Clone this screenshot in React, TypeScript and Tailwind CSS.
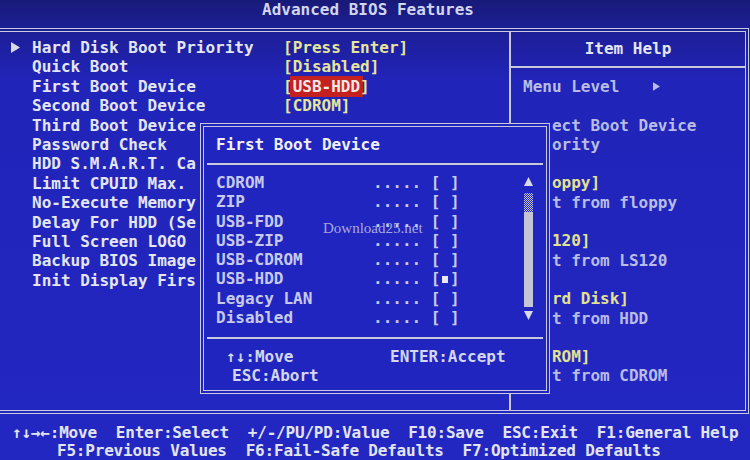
import React from "react";

const rows: [string, string][] = [
  ["Hard Disk Boot Priority", "[Press Enter]"],
  ["Quick Boot", "[Disabled]"],
  ["First Boot Device", "[USB-HDD]"],
  ["Second Boot Device", "[CDROM]"],
  ["Third Boot Device", ""],
  ["Password Check", ""],
  ["HDD S.M.A.R.T. Capability", ""],
  ["Limit CPUID Max. to 3", ""],
  ["No-Execute Memory Protect", ""],
  ["Delay For HDD (Secs)", ""],
  ["Full Screen LOGO Show", ""],
  ["Backup BIOS Image to HDD", ""],
  ["Init Display First", ""],
];

const devices = ["CDROM", "ZIP", "USB-FDD", "USB-ZIP", "USB-CDROM", "USB-HDD", "Legacy LAN", "Disabled"];

const help: { t: string; y?: boolean }[] = [
  { t: "Select Boot Device" },
  { t: "Priority" },
  { t: "" },
  { t: "[Floppy]", y: true },
  { t: "Boot from floppy" },
  { t: "" },
  { t: "[LS120]", y: true },
  { t: "Boot from LS120" },
  { t: "" },
  { t: "[Hard Disk]", y: true },
  { t: "Boot from HDD" },
  { t: "" },
  { t: "[CDROM]", y: true },
  { t: "Boot from CDROM" },
];

function Arrow({ className }: { className?: string }) {
  return (
    <svg width="9" height="11" viewBox="0 0 9 11" className={className}>
      <polygon points="0,0 9,5.5 0,11" fill="currentColor" />
    </svg>
  );
}

function ScrollBar() {
  return (
    <svg width="11" height="150" viewBox="0 0 11 150" className="block">
      <defs>
        <pattern id="dots" width="2" height="2" patternUnits="userSpaceOnUse">
          <rect width="2" height="2" fill="#2125bf" />
          <rect width="1" height="1" fill="#c8cadc" />
          <rect x="1" y="1" width="1" height="1" fill="#c8cadc" />
        </pattern>
      </defs>
      <polygon points="5.5,0 10,9 1,9" fill="#d8dae8" />
      <rect x="1" y="16" width="9" height="19" fill="url(#dots)" />
      <rect x="1" y="35" width="9" height="95" fill="#c4c6d6" />
      <polygon points="1,134 10,134 5.5,143" fill="#d8dae8" />
    </svg>
  );
}

export default function App() {
  return (
    <div
      className="relative w-[750px] h-[460px] overflow-hidden bg-[linear-gradient(180deg,#181a78_0px,#1c1e94_28px,#2124b8_80px,#2327c2_460px)] font-bold text-[16px]"
      style={{ fontFamily: '"DejaVu Sans Mono", "Liberation Mono", monospace' }}
    >
      {/* Header */}
      <div className="h-[28px] flex justify-center pr-[14px] leading-[19px] text-[#d2d5ee] whitespace-pre">
        Advanced BIOS Features
      </div>

      {/* Main frame */}
      <div className="w-[749px] h-[386px] border-t-4 border-r-4 border-b-4 border-double border-[#c8cadc] flex">
        {/* Left column */}
        <div className="w-[511px] h-full border-r-2 border-[#c8cadc] pt-[6px] leading-[19.4px]">
          {rows.map(([label, value], i) => (
            <div key={label} className="flex items-center h-[19.4px]">
              <div className="w-[32px] pl-[11px] flex items-center text-[#d8dae8]">
                {i === 0 ? <Arrow /> : null}
              </div>
              <div
                className={`whitespace-pre overflow-hidden text-[#e4e6f4] ${i >= 4 ? "w-[164px]" : "w-[251px]"}`}
              >
                {label}
              </div>
              {value ? (
                <div className="whitespace-pre text-[#e6e69a]">
                  {value === "[USB-HDD]" ? (
                    <>
                      [<span className="bg-[#c42020] text-[#f2e8e8] -mx-[3px] px-[3px] py-[1px]">USB-HDD</span>]
                    </>
                  ) : (
                    value
                  )}
                </div>
              ) : null}
            </div>
          ))}
        </div>

        {/* Right column */}
        <div className="flex-1 h-full flex flex-col">
          <div className="h-[34px] leading-[34px] text-center text-[#e4e6f4] shrink-0">Item Help</div>
          <div className="h-[2px] bg-[#c8cadc] shrink-0" />
          <div className="pt-[9px] leading-[19.3px] whitespace-pre">
            <div className="h-[19.3px] pl-[12px] flex items-center text-[#b9bde6]">
              Menu Level
              <Arrow className="ml-[34px] w-[7px] h-[9px]" />
            </div>
            <div className="h-[19.3px]" />
            <div className="ml-[41px] overflow-hidden">
              <div className="-ml-[29px]">
                {help.map((h, i) => (
                  <div
                    key={i}
                    className={`h-[19.3px] flex items-center ${h.y ? "text-[#e2e290]" : "text-[#b9bde6]"}`}
                  >
                    {h.t}
                  </div>
                ))}
              </div>
            </div>
          </div>
        </div>
      </div>

      {/* Bottom key help */}
      <div className="pt-[10px] leading-[18px] tracking-[-0.2px] text-[#e2e4f4] whitespace-pre">
        <div className="pl-[12px]">↑↓→←:Move  Enter:Select  +/-/PU/PD:Value  F10:Save  ESC:Exit  F1:General Help</div>
        <div className="pl-[57px]">F5:Previous Values  F6:Fail-Safe Defaults  F7:Optimized Defaults</div>
      </div>

      {/* Popup */}
      <div className="absolute left-[200px] top-[123px] w-[350px] h-[271px] border-4 border-double border-[#c8cadc] bg-[#2125bf] flex flex-col">
        <div className="h-[36px] leading-[36px] pl-[12px] text-[#f0f0f8] shrink-0">First Boot Device</div>
        <div className="h-[2px] mx-[3px] bg-[#c8cadc] shrink-0" />
        <div className="h-[172px] flex shrink-0">
          <div className="flex-1 pt-[8px] pl-[12px] leading-[19.3px] text-[#c6caee]">
            {devices.map((d) => (
              <div key={d} className="h-[19.3px] flex items-center whitespace-pre">
                <div className="w-[157px]">{d}</div>
                <div>..... </div>
                <div className="flex items-center">
                  [
                  {d === "USB-HDD" ? (
                    <span className="w-[9.6px] flex justify-center">
                      <span className="block w-[6px] h-[7px] bg-[#e8e8f4]" />
                    </span>
                  ) : (
                    " "
                  )}
                  ]
                </div>
              </div>
            ))}
          </div>
          <div className="w-[11px] mr-[12px] pt-[12px]">
            <ScrollBar />
          </div>
        </div>
        <div className="h-[2px] mx-[3px] bg-[#c8cadc] shrink-0" />
        <div className="pt-[8px] pl-[22px] leading-[19.3px] text-[#d4d7f0] whitespace-pre">
          <div className="flex">
            <div className="w-[164px]">↑↓:Move</div>
            <div>ENTER:Accept</div>
          </div>
          <div className="pl-[6px]">ESC:Abort</div>
        </div>
      </div>

      {/* Watermark */}
      <div
        className="absolute left-[323px] top-[218px] text-[15px] font-normal text-[#c8cae6]/80 leading-[20px]"
        style={{ fontFamily: '"Liberation Serif", serif' }}
      >
        Download25.net
      </div>
    </div>
  );
}
